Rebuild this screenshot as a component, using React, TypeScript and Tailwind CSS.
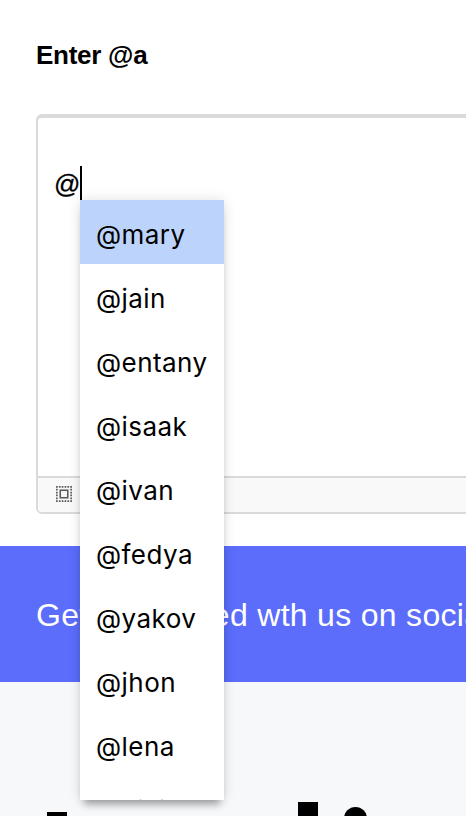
import React from "react";

const names = ["mary", "jain", "entany", "isaak", "ivan", "fedya", "yakov", "jhon", "lena", "nikita"];

function SelectAllIcon() {
  return (
    <svg width="16" height="16" viewBox="0 0 16 16" fill="none" stroke="#5c5c5c">
      <rect x="4.25" y="4.25" width="7.5" height="7.5" strokeWidth="1.6" />
      <path d="M0 .85H16M0 15.15H16M.85 2.85V14M15.15 2.85V14" strokeWidth="1.7" strokeDasharray="1.7 1.16" />
    </svg>
  );
}

export default function App() {
  return (
    <div className="relative flex h-[816px] w-[466px] flex-col overflow-hidden bg-white font-['Liberation_Sans',sans-serif] text-black">
      <h1 className="h-[114px] pt-[35px] pl-9 text-[26px] leading-10 font-bold tracking-[-0.26px]">Enter @a</h1>
      <section className="ml-9 h-[400px] w-[480px] shrink-0 rounded-[6px] border-2 border-t-4 border-[#dadada]">
        <div className="flex h-[358px] items-start pt-12 pl-4">
          <span className="w-[26px] text-[26px] leading-[36px] [-webkit-text-stroke:0.3px_black]">@</span>
          <span className="h-[34px] w-[2px] bg-black" />
        </div>
        <footer className="flex h-9 items-start rounded-b border-t-2 border-[#dadada] bg-[#f9f9f9] pt-2 pl-[18px]">
          <SelectAllIcon />
        </footer>
      </section>
      <section className="mt-8 flex h-[136px] shrink-0 items-center bg-[#5b6dfa] pt-0.5 pl-9 text-[32px] tracking-[0.3px] whitespace-nowrap text-white">
        Get connected wth us on social
      </section>
      <section className="h-[134px] bg-[#f7f8fa]">
        <svg width="466" height="134" viewBox="0 682 466 134">
          <path d="M47 812h20v4H47zM298 802h20v14h-20z" />
          <circle cx="355.5" cy="818.5" r="11.5" />
        </svg>
      </section>
      <ul className="absolute top-[200px] left-20 h-[600px] w-36 overflow-hidden bg-white font-['Inter',sans-serif] text-[26px] tracking-[0.45px] shadow-[0_8px_8px_-4px_rgba(0,0,0,0.35),0_0_12px_rgba(0,0,0,0.12)]">
        {names.map((name, index) => (
          <li key={name} className={`flex h-16 items-center pt-1 pl-4 whitespace-nowrap ${index === 0 ? "bg-[#bcd4fb]" : ""}`}>
            @{name}
          </li>
        ))}
      </ul>
    </div>
  );
}
